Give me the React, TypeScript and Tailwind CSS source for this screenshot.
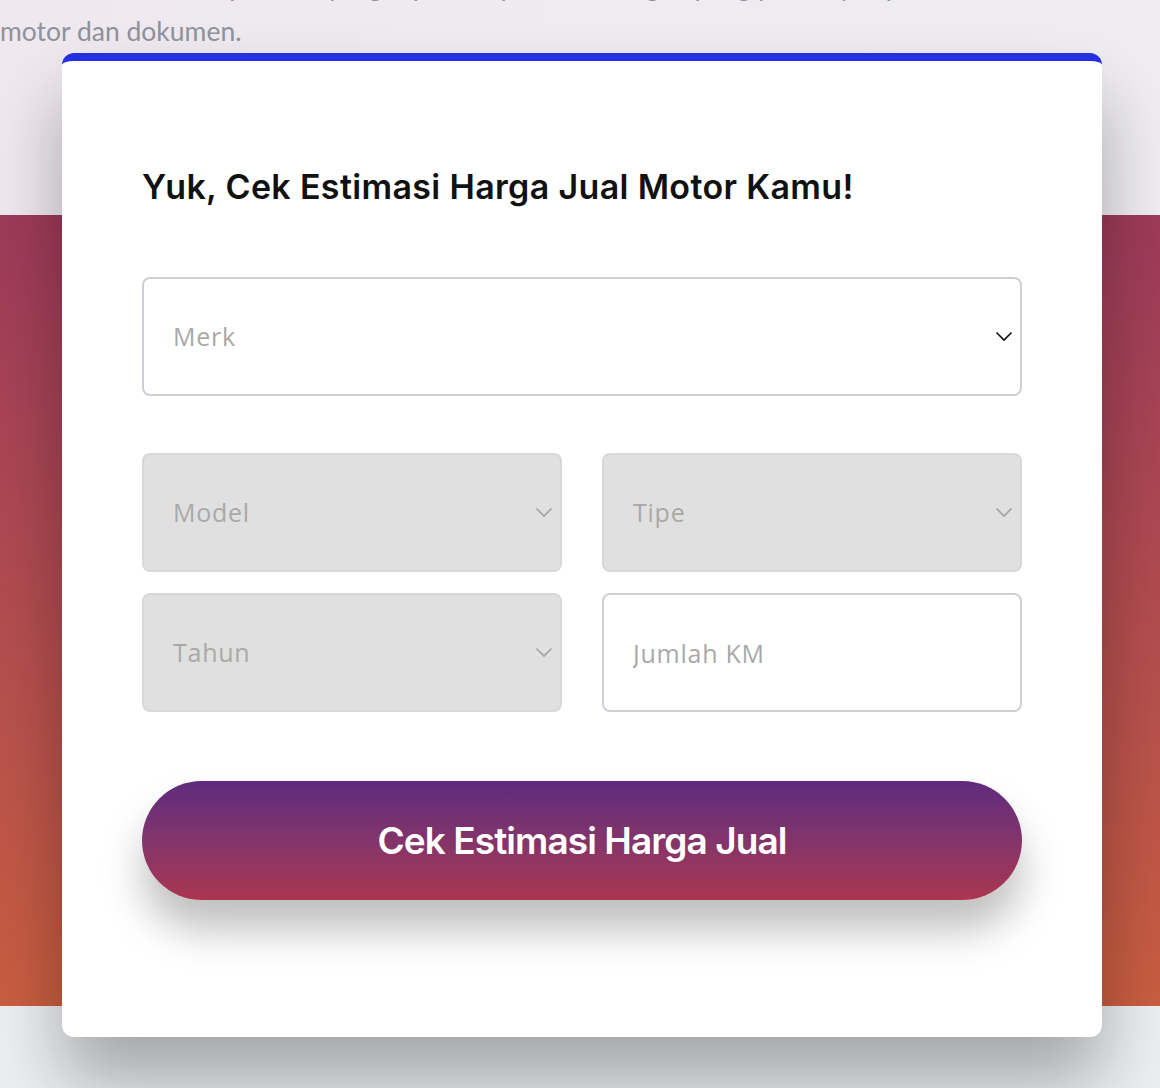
import React from "react";

const sans = "font-['Inter','Noto_Sans',sans-serif]";
const field = "font-['Open_Sans','Noto_Sans',sans-serif]";

function Chevron({ dark }: { dark?: boolean }) {
  return (
    <svg
      width="18"
      height="11"
      viewBox="0 0 18 11"
      fill="none"
      className={dark ? "text-[#111111]" : "text-[#a3a3a3]"}
    >
      <path d="M1.5 1.5L9 9L16.5 1.5" stroke="currentColor" strokeWidth="1.6" />
    </svg>
  );
}

function SelectBox({
  label,
  disabled,
}: {
  label: string;
  disabled?: boolean;
}) {
  return (
    <div
      className={
        "flex h-[119px] items-center justify-between rounded-lg border-2 pl-[29px] pr-[7px] " +
        (disabled
          ? "border-[#d6d9dc] bg-[#e0e0e0]"
          : "border-[#ccd0d4] bg-white")
      }
    >
      <span
        className={`${field} text-[25px] tracking-[0.03em] text-[#a9a9a9]`}
      >
        {label}
      </span>
      <Chevron dark={!disabled} />
    </div>
  );
}

export default function App() {
  return (
    <div className="min-h-[1088px] overflow-hidden bg-[#eceef1]">
      <div className="flow-root h-[215px] bg-gradient-to-r from-[#efe9ef] to-[#efedf2]">
        <p
          className={`font-['Lato','Noto_Sans',sans-serif] -mt-[36px] whitespace-nowrap text-[26.5px] leading-[45px] text-[#8e929c]`}
        >
          Kami bantu carikan pembeli yang tepat, tanpa ribet dan gampang proses penyerahan unit
          <br />
          motor dan dokumen.
        </p>
      </div>
      <div className="flow-root h-[791px] bg-gradient-to-b from-[#9d3a5a] to-[#c95e40]">
        <div className="relative z-10 ml-[62px] -mt-[162px] h-[984px] w-[1040px] rounded-xl border-t-8 border-[#2530e2] bg-white px-[80px] pt-[106px] shadow-[0_45px_70px_rgba(0,0,0,0.3)]">
          <h1
            className={`${sans} text-[34px] font-semibold leading-[40px] tracking-[0.01em] text-[#111111]`}
          >
            Yuk, Cek Estimasi Harga Jual Motor Kamu!
          </h1>

          <div className="mt-[70px]">
            <SelectBox label="Merk" />
          </div>

          <div className="mt-[57px] grid grid-cols-2 gap-x-[40px] gap-y-[21px]">
            <SelectBox label="Model" disabled />
            <SelectBox label="Tipe" disabled />
            <SelectBox label="Tahun" disabled />
            <input
              placeholder="Jumlah KM"
              className={`${field} h-[119px] rounded-lg border-2 border-[#ccd0d4] bg-white pl-[29px] text-[25px] tracking-[0.03em] text-[#333] outline-none placeholder:text-[#a9a9a9]`}
            />
          </div>

          <button
            className={`${sans} mt-[69px] flex h-[119px] w-full items-center justify-center rounded-full bg-gradient-to-b from-[#5f2a7e] to-[#aa3550] text-[37px] font-semibold tracking-[-0.025em] text-white shadow-[0_30px_40px_rgba(0,0,0,0.25)]`}
          >
            Cek Estimasi Harga Jual
          </button>
        </div>
      </div>
    </div>
  );
}
